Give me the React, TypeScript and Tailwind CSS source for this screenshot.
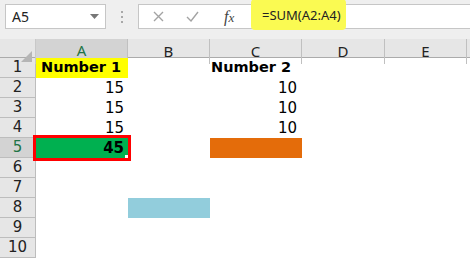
import React from "react";

const cols = ["A", "B", "C", "D", "E"];
const gridCols = "grid grid-cols-[36px_92px_82px_92px_83px_82px_1fr]";

function Cell({ children, className = "" }: { children?: React.ReactNode; className?: string }) {
  return <div className={`relative h-[20px] flex items-center ${className}`}>{children}</div>;
}

export default function App() {
  const rows = Array.from({ length: 10 }, (_, i) => i + 1);
  return (
    <div className="w-[470px] h-[259px] overflow-hidden bg-white flex flex-col" style={{ fontFamily: '"DejaVu Sans", Verdana, sans-serif' }}>
      {/* Toolbar */}
      <div className="h-[39px] bg-[#efefef] flex items-start pt-[4px] pl-[5px] shrink-0">
        <div className="w-[101px] h-[25px] bg-white border border-[#c6c6c6] flex items-center justify-between pl-[6px] pr-[6px]">
          <span className="text-[14px] text-[#222]" style={{ fontFamily: '"Noto Sans", sans-serif' }}>A5</span>
          <svg width="9" height="5" viewBox="0 0 9 5"><path d="M0 0h9L4.5 5z" fill="#777" /></svg>
        </div>
        <div className="w-[32px] h-[25px] flex flex-col items-center justify-center gap-[3px]">
          <span className="w-[2px] h-[2px] bg-[#a8a8a8]" />
          <span className="w-[2px] h-[2px] bg-[#a8a8a8]" />
          <span className="w-[2px] h-[2px] bg-[#a8a8a8]" />
        </div>
        <div className="flex-1 h-[25px] bg-white border border-r-0 border-[#c6c6c6] flex items-center">
          <div className="w-[112px] flex items-center shrink-0">
            <svg className="ml-[14px]" width="11" height="11" viewBox="0 0 11 11"><path d="M1 1l9 9M10 1l-9 9" stroke="#a3a3a3" strokeWidth="1.4" /></svg>
            <svg className="ml-[22px]" width="13" height="11" viewBox="0 0 13 11"><path d="M1 6l4 4 7-9" stroke="#a3a3a3" strokeWidth="1.4" fill="none" /></svg>
            <span className="ml-[25px] text-[16px] italic text-[#444]" style={{ fontFamily: '"Liberation Serif", serif' }}>f<span className="text-[13px]">x</span></span>
          </div>
          <div className="relative h-[31px] -mt-[5px] w-[95px] bg-[#fafa52] rounded-[4px] flex items-center pl-[11px] pt-[3px]">
            <span className="text-[13px] text-[#222]" style={{ fontFamily: '"Noto Sans", sans-serif' }}>=SUM(A2:A4)</span>
          </div>
        </div>
      </div>

      {/* Column headers */}
      <div className={`${gridCols} h-[19px] bg-[#e6e6e6] border-b border-[#ababab] shrink-0`} style={{ fontFamily: '"Noto Sans", sans-serif' }}>
        <div className="relative border-r border-[#c8c8c8]">
          <svg className="absolute right-[3px] bottom-[2px]" width="11" height="11" viewBox="0 0 11 11"><path d="M11 0v11H0z" fill="#b5b5b5" /></svg>
        </div>
        {cols.map((c) => (
          <div
            key={c}
            className={`flex items-center justify-center text-[15px] border-r border-[#c0c0c0] ${c === "A" ? "bg-[#d3d3d3] text-[#217346] border-b-2 border-b-[#217346]" : "text-[#222]"}`}
          >
            {c}
          </div>
        ))}
        <div />
      </div>

      {/* Rows */}
      {rows.map((r) => (
        <div key={r} className={`${gridCols} shrink-0`}>
          <div
            className={`h-[20px] flex items-center justify-center text-[15px] border-r border-b border-[#bdbdbd] ${r === 5 ? "bg-[#d3d3d3] text-[#217346]" : "bg-[#e6e6e6] text-[#222]"}`}
          >
            {r}
          </div>
          {r === 1 && (
            <>
              <Cell className="bg-[#ffff00] pl-[5px] font-bold text-[14.5px] text-black">Number 1</Cell>
              <Cell />
              <Cell className="pl-[1px] font-bold text-[14.5px] text-black">Number 2</Cell>
            </>
          )}
          {(r === 2 || r === 3 || r === 4) && (
            <>
              <Cell className="justify-end pr-[4px] text-[15px] text-black">15</Cell>
              <Cell />
              <Cell className="justify-end pr-[5px] text-[15px] text-black">10</Cell>
            </>
          )}
          {r === 5 && (
            <>
              <Cell className="bg-[#00b050] justify-end pr-[4px] font-bold text-[15px] text-black z-10">
                45
                <span className="absolute -inset-[3px] border-[3px] border-[#ff0000]" />
                <span className="absolute right-0 bottom-0 w-[3px] h-[3px] bg-white" />
              </Cell>
              <Cell />
              <Cell className="bg-[#e46c0a]" />
            </>
          )}
          {r === 8 && (
            <>
              <Cell />
              <Cell className="bg-[#92cddc]" />
            </>
          )}
        </div>
      ))}
    </div>
  );
}
